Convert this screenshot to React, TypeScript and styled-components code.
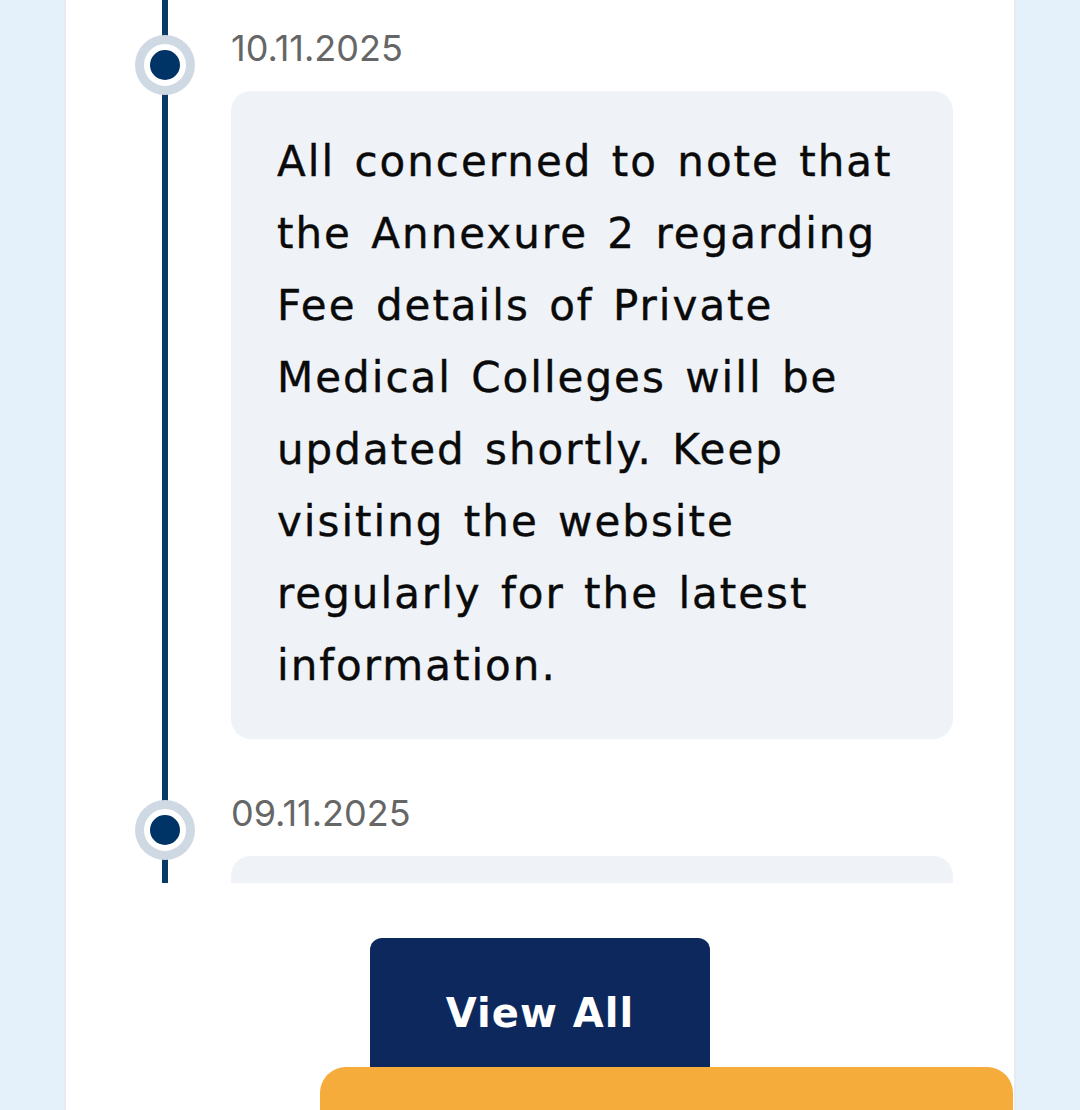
import styled, { createGlobalStyle } from 'styled-components';

const notices = [
  {
    date: '10.11.2025',
    text: 'All concerned to note that the Annexure 2 regarding Fee details of Private Medical Colleges will be updated shortly. Keep visiting the website regularly for the latest information.',
  },
  {
    date: '09.11.2025',
    text: 'Candidates are advised to check the revised schedule for the next round of counselling.',
  },
];

const App = () => {
  return (
    <>
      <GlobalStyle />
      <Page>
        <Card>
          <TimelineViewport>
            <Timeline>
              {notices.map((notice) => (
                <Item key={notice.date}>
                  <Rail>
                    <Dot />
                  </Rail>
                  <Content>
                    <DateText>{notice.date}</DateText>
                    <NoteBox>{notice.text}</NoteBox>
                  </Content>
                </Item>
              ))}
            </Timeline>
          </TimelineViewport>
          <ButtonRow>
            <ViewAllButton type="button">View All</ViewAllButton>
          </ButtonRow>
        </Card>
        <FloatingBar />
      </Page>
    </>
  );
};

export default App;

const GlobalStyle = createGlobalStyle`
  * {
    box-sizing: border-box;
  }

  body {
    margin: 0;
    background: #e4f1fb;
    font-family: Inter, "Noto Sans", sans-serif;
    overflow: hidden;
  }
`;

const Page = styled.main`
  width: 1080px;
  height: 1110px;
  overflow: hidden;
  padding-left: 64px;
`;

const Card = styled.section`
  width: 952px;
  height: 1110px;
  background: #ffffff;
  border-left: 2px solid #e6eaf1;
  border-right: 2px solid #e6eaf1;
`;

const TimelineViewport = styled.div`
  height: 883px;
  overflow: hidden;
  padding-left: 69px;
`;

const Timeline = styled.ol`
  position: relative;
  list-style: none;
  margin: 0;
  padding: 23px 0 0;
  display: flex;
  flex-direction: column;
  gap: 49px;

  &::before {
    content: '';
    position: absolute;
    left: 27px;
    top: 0;
    bottom: 0;
    width: 6px;
    background: #0b3a6a;
  }
`;

const Item = styled.li`
  display: grid;
  grid-template-columns: 60px 1fr;
  column-gap: 36px;
`;

const Rail = styled.div`
  position: relative;
  padding-top: 12px;
`;

const Dot = styled.span`
  position: relative;
  display: block;
  width: 60px;
  height: 60px;
  border-radius: 50%;
  background: #cfd9e4;

  &::after {
    content: '';
    position: absolute;
    top: 9px;
    left: 9px;
    width: 30px;
    height: 30px;
    border-radius: 50%;
    border: 6px solid #ffffff;
    background: #003366;
    box-sizing: content-box;
  }
`;

const Content = styled.div`
  display: flex;
  flex-direction: column;
  gap: 18px;
  width: 722px;
`;

const DateText = styled.p`
  margin: 0;
  height: 50px;
  font-size: 36px;
  line-height: 50px;
  font-weight: 400;
  color: #666666;
`;

const NoteBox = styled.div`
  padding: 35px 40px 37px 46px;
  background: #eff3f8;
  border-radius: 20px;
  font-family: "DejaVu Sans", sans-serif;
  font-size: 42px;
  line-height: 72px;
  font-weight: 400;
  letter-spacing: 2px;
  word-spacing: 4px;
  -webkit-text-stroke: 0.4px #0a0a0a;
  color: #0a0a0a;
`;

const ButtonRow = styled.div`
  display: flex;
  justify-content: center;
  padding-top: 55px;
`;

const ViewAllButton = styled.button`
  width: 340px;
  height: 150px;
  border: none;
  border-radius: 12px;
  background: #0c285d;
  color: #ffffff;
  font-family: "DejaVu Sans", sans-serif;
  font-size: 40px;
  font-weight: 700;
  letter-spacing: 1px;
  cursor: pointer;
`;

const FloatingBar = styled.div`
  position: fixed;
  left: 320px;
  top: 1067px;
  width: 693px;
  height: 80px;
  border-radius: 26px 26px 0 0;
  background: #f5ac3b;
`;
